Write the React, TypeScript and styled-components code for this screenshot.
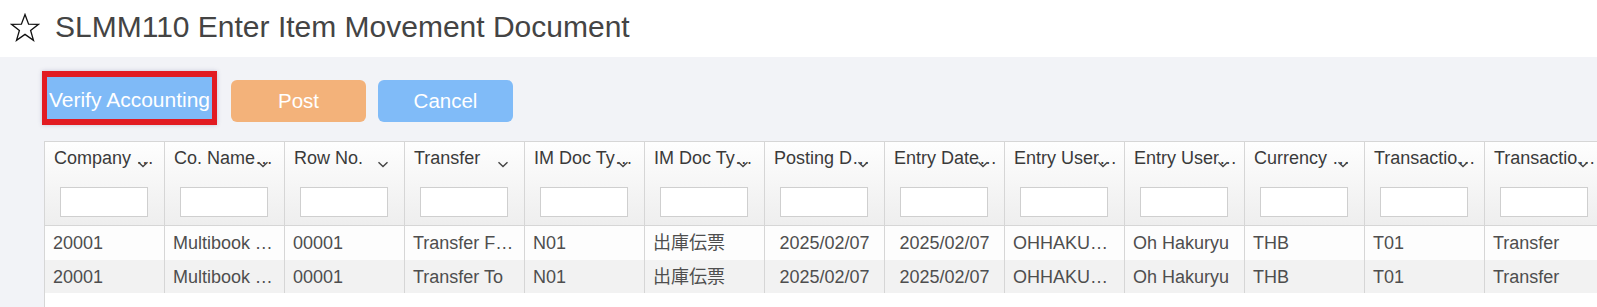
import React from 'react';
import styled, { createGlobalStyle } from 'styled-components';

const GlobalStyle = createGlobalStyle`
	html, body {
		margin: 0;
		padding: 0;
		height: 100%;
		overflow: hidden;
		background: #f2f3f7;
		font-family: 'Liberation Sans', Arial, 'Noto Sans CJK JP', sans-serif;
	}
	#root {
		height: 100%;
	}
`;

const Page = styled.div`
	height: 100vh;
	display: flex;
	flex-direction: column;
	overflow: hidden;
`;

const TitleBar = styled.div`
	height: 57px;
	flex: none;
	box-sizing: border-box;
	background: #fff;
	display: flex;
	align-items: center;
	padding: 0 0 3px 10px;
	gap: 15px;
`;

const Title = styled.h1`
	margin: 0;
	font-size: 30px;
	font-weight: 400;
	color: #444;
	white-space: nowrap;
`;

const Toolbar = styled.div`
	height: 84px;
	flex: none;
	box-sizing: border-box;
	display: flex;
	align-items: flex-start;
	padding: 14px 0 0 42px;
	gap: 12px;
`;

const ActionButton = styled.button<{ color: string; highlighted?: boolean }>`
	box-sizing: content-box;
	height: ${(p) => (p.highlighted ? '39px' : '42px')};
	width: ${(p) => (p.highlighted ? '165px' : '135px')};
	margin-top: ${(p) => (p.highlighted ? '0' : '9px')};
	margin-right: ${(p) => (p.highlighted ? '2px' : '0')};
	padding: ${(p) => (p.highlighted ? '3px 0 0' : '0')};
	border: ${(p) => (p.highlighted ? '5px solid #e21b22' : 'none')};
	border-width: ${(p) => (p.highlighted ? '6px 5px' : '0')};
	border-radius: ${(p) => (p.highlighted ? '0' : '6px')};
	box-shadow: ${(p) => (p.highlighted ? '0 0 4px rgba(60, 60, 120, 0.25)' : 'none')};
	background: ${(p) => p.color};
	color: #fff;
	font-family: inherit;
	font-size: ${(p) => (p.highlighted ? '21px' : '20.5px')};
	white-space: nowrap;
	overflow: hidden;
	text-align: center;
	cursor: pointer;
`;

const TableWrap = styled.div`
	flex: 1;
	margin-left: 44px;
	background: #fff;
	border-left: 1px solid #d6d6d6;
	border-top: 1px solid #d6d6d6;
	overflow: hidden;
`;

const Grid = styled.table`
	border-collapse: separate;
	border-spacing: 0;
	table-layout: fixed;
	width: 1560px;
`;

const HeadCell = styled.th`
	position: relative;
	width: 120px;
	height: 84px;
	box-sizing: border-box;
	padding: 6px 0 0 0;
	vertical-align: top;
	text-align: left;
	font-weight: 400;
	background: linear-gradient(#fefefe, #eeeeee);
	border-right: 1px solid #d6d6d6;
	border-bottom: 1px solid #d6d6d6;
`;

const HeadLabel = styled.div`
	padding: 0 6px 0 9px;
	font-size: 18px;
	line-height: 20px;
	color: #3a3a3a;
	white-space: nowrap;
	overflow: hidden;
	text-overflow: ellipsis;
`;

const SortIcon = styled.svg`
	position: absolute;
	top: 19px;
	right: 15px;
	width: 12px;
	height: 7px;
`;

const FilterInput = styled.input`
	display: block;
	box-sizing: border-box;
	margin: 19px 0 0 15px;
	width: 88px;
	height: 30px;
	border: 1px solid #cfcfcf;
	background: #fff;
	padding: 0 4px;
	font-family: inherit;
`;

const Row = styled.tr<{ striped?: boolean }>`
	background: ${(p) => (p.striped ? '#f2f2f2' : '#fdfdfd')};
`;

const Cell = styled.td<{ center?: boolean }>`
	width: 120px;
	height: 33.5px;
	box-sizing: border-box;
	padding: 1px 8px 0 8px;
	font-size: 18px;
	line-height: 20px;
	color: #4e4e4e;
	white-space: nowrap;
	overflow: hidden;
	text-overflow: ellipsis;
	text-align: ${(p) => (p.center ? 'center' : 'left')};
	border-right: 1px solid #d6d6d6;
`;

const columns = [
	'Company Code',
	'Co. Name (Short)',
	'Row No.',
	'Transfer',
	'IM Doc Type Code',
	'IM Doc Type Name',
	'Posting Date Time',
	'Entry Date Time',
	'Entry User Code',
	'Entry User Name',
	'Currency Code',
	'Transaction Type',
	'Transaction Type Name',
];

const rows = [
	['20001', 'Multibook Thailand', '00001', 'Transfer From', 'N01', '出庫伝票', '2025/02/07', '2025/02/07', 'OHHAKURYU', 'Oh Hakuryu', 'THB', 'T01', 'Transfer'],
	['20001', 'Multibook Thailand', '00001', 'Transfer To', 'N01', '出庫伝票', '2025/02/07', '2025/02/07', 'OHHAKURYU', 'Oh Hakuryu', 'THB', 'T01', 'Transfer'],
];

const centered = [6, 7];

const StarIcon = () => (
	<svg width="30" height="29" viewBox="0 0 30 29">
		<polygon
			points="15,1.5 18.6,11.2 28.5,11.3 20.6,17.4 23.5,27.3 15,21.4 6.5,27.3 9.4,17.4 1.5,11.3 11.4,11.2"
			fill="none"
			stroke="#111"
			strokeWidth="1.3"
			strokeLinejoin="miter"
		/>
	</svg>
);

export default function App() {
	return (
		<Page>
			<GlobalStyle />
			<TitleBar>
				<StarIcon />
				<Title>SLMM110 Enter Item Movement Document</Title>
			</TitleBar>
			<Toolbar>
				<ActionButton color="#7fbaf7" highlighted>
					Verify Accounting
				</ActionButton>
				<ActionButton color="#f3b27a">Post</ActionButton>
				<ActionButton color="#80bbf8">Cancel</ActionButton>
			</Toolbar>
			<TableWrap>
				<Grid>
					<thead>
						<tr>
							{columns.map((col) => (
								<HeadCell key={col}>
									<HeadLabel>{col}</HeadLabel>
									<SortIcon viewBox="0 0 12 7">
										<path d="M1.5 1.2 L6 5.6 L10.5 1.2" fill="none" stroke="#444" strokeWidth="1.4" />
									</SortIcon>
									<FilterInput />
								</HeadCell>
							))}
						</tr>
					</thead>
					<tbody>
						{rows.map((row, i) => (
							<Row key={i} striped={i % 2 === 1}>
								{row.map((value, j) => (
									<Cell key={j} center={centered.includes(j)}>
										{value}
									</Cell>
								))}
							</Row>
						))}
					</tbody>
				</Grid>
			</TableWrap>
		</Page>
	);
}
